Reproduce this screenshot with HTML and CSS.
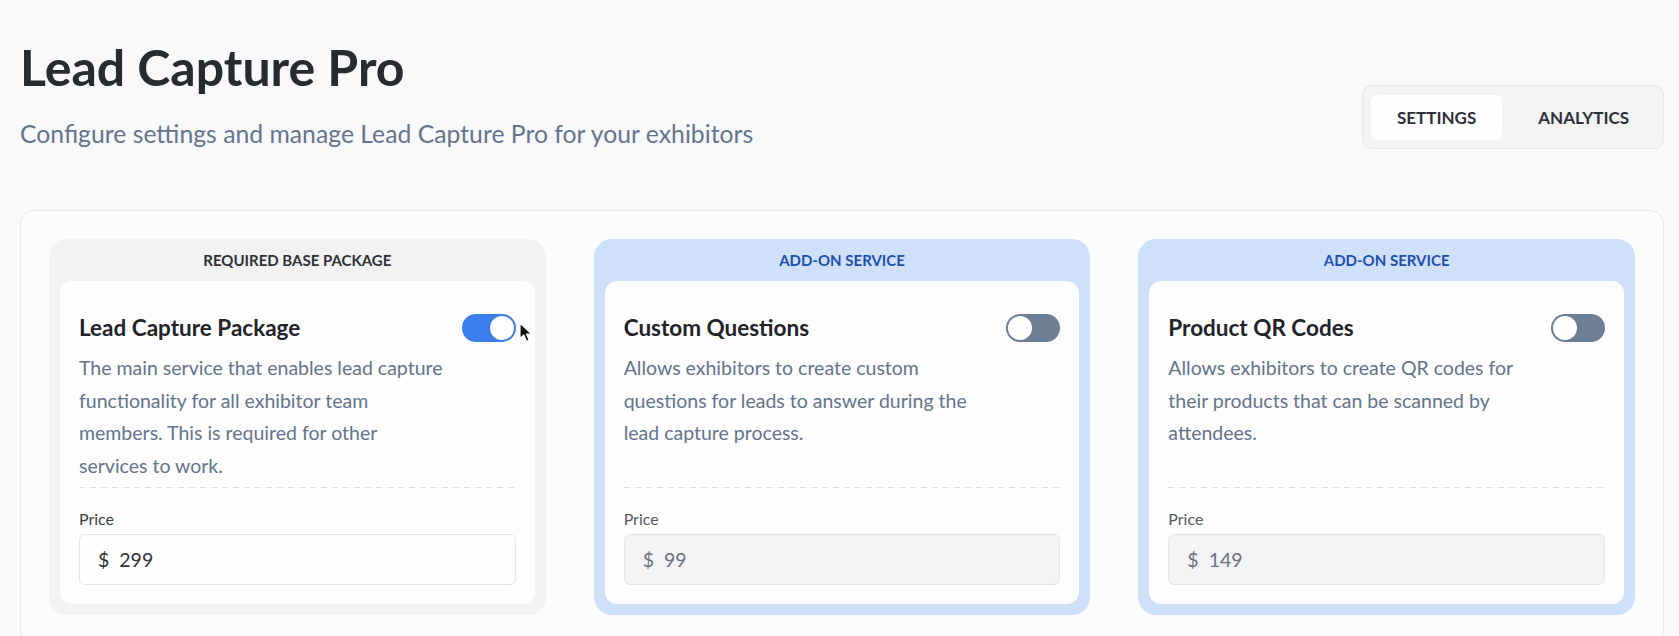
FILE: index.html
```html
<!DOCTYPE html>
<html lang="en">
<head>
<meta charset="utf-8">
<title>Lead Capture Pro</title>
<link rel="stylesheet" href="styles.css">
</head>
<body>
<div class="page">
  <header class="top">
    <div class="intro">
      <h1 class="title">Lead Capture Pro</h1>
      <p class="subtitle">Configure settings and manage Lead Capture Pro for your exhibitors</p>
    </div>
    <nav class="tabs">
      <button class="tab active">SETTINGS</button>
      <button class="tab">ANALYTICS</button>
    </nav>
  </header>

  <section class="panel">
    <div class="grid">
      <article class="pkg base">
        <div class="pkg-label">REQUIRED BASE PACKAGE</div>
        <div class="pkg-body">
          <div class="pkg-top">
            <div class="pkg-text">
              <h2 class="pkg-title">Lead Capture Package</h2>
              <p class="desc">The main service that enables lead capture functionality for all exhibitor team members. This is required for other services to work.</p>
            </div>
            <span class="toggle on"><span class="knob"></span>
              <svg class="cursor" width="14" height="21" viewBox="0 0 14 21"><path d="M1 1 L1 16.5 L4.8 13 L7.6 19.4 L10.2 18.3 L7.5 12 L12.6 12 Z" fill="#111" stroke="#fff" stroke-width="1.2" stroke-linejoin="round"/></svg>
            </span>
          </div>
          <div class="divider"></div>
          <label class="price-label">Price</label>
          <div class="field"><span class="cur">$</span><span>299</span></div>
        </div>
      </article>

      <article class="pkg addon">
        <div class="pkg-label">ADD-ON SERVICE</div>
        <div class="pkg-body">
          <div class="pkg-top">
            <div class="pkg-text">
              <h2 class="pkg-title">Custom Questions</h2>
              <p class="desc">Allows exhibitors to create custom questions for leads to answer during the lead capture process.</p>
            </div>
            <span class="toggle off"><span class="knob"></span></span>
          </div>
          <div class="divider"></div>
          <label class="price-label muted">Price</label>
          <div class="field disabled"><span class="cur">$</span><span>99</span></div>
        </div>
      </article>

      <article class="pkg addon">
        <div class="pkg-label">ADD-ON SERVICE</div>
        <div class="pkg-body">
          <div class="pkg-top">
            <div class="pkg-text">
              <h2 class="pkg-title">Product QR Codes</h2>
              <p class="desc">Allows exhibitors to create QR codes for their products that can be scanned by attendees.</p>
            </div>
            <span class="toggle off"><span class="knob"></span></span>
          </div>
          <div class="divider"></div>
          <label class="price-label muted">Price</label>
          <div class="field disabled"><span class="cur">$</span><span>149</span></div>
        </div>
      </article>
    </div>
  </section>
</div>
</body>
</html>
```

FILE: styles.css
```css
html, body {
  margin: 0;
  padding: 0;
  overflow: hidden;
  background: #f8f9fb;
  font-family: Lato, "Noto Sans", sans-serif;
}

.page {
  padding: 38px 15px 0 20px;
}

.top {
  display: flex;
  justify-content: space-between;
  align-items: flex-end;
}

.title {
  margin: 0;
  font-size: 50px;
  line-height: 58px;
  font-weight: 700;
  color: #272a31;
}

.subtitle {
  margin: 21px 0 0;
  font-size: 24.75px;
  line-height: 33px;
  color: #65748b;
}

.tabs {
  display: flex;
  gap: 10px;
  padding: 9px 8px 8px;
  background: #f3f3f4;
  border: 1px solid #e5e6e8;
  border-radius: 10px;
  margin-bottom: 1px;
}

.tab {
  border: 0;
  background: transparent;
  font-family: Lato, "Noto Sans", sans-serif;
  font-weight: 700;
  font-size: 17px;
  height: 45px;
  padding: 0 26px;
  color: #2d3038;
  border-radius: 6px;
}

.tab.active {
  background: #fefefe;
}

.panel {
  margin-top: 60px;
  background: #fcfcfc;
  border: 1px solid #e6e7ea;
  border-radius: 14px;
  padding: 28px;
}

.grid {
  display: grid;
  grid-template-columns: repeat(3, 1fr);
  gap: 48px;
}

.pkg {
  border-radius: 18px;
  padding: 0 11px 11px;
  display: flex;
  flex-direction: column;
}

.pkg.base { background: #f2f2f3; }
.pkg.addon { background: #cfe1f8; }

.pkg-label {
  text-align: center;
  font-size: 15px;
  font-weight: 700;
  line-height: 20px;
  padding: 11px 0;
  color: #2f3137;
}

.addon .pkg-label { color: #1f4fae; }

.pkg-body {
  flex: 1;
  background: #fdfdfd;
  border-radius: 12px;
  padding: 33px 19px 19px;
  display: flex;
  flex-direction: column;
}

.pkg-top {
  display: flex;
  gap: 12px;
  align-items: flex-start;
  padding-bottom: 5px;
}

.pkg-text { flex: 1; }

.pkg-title {
  margin: 0;
  font-size: 22.5px;
  line-height: 28px;
  font-weight: 700;
  color: #212328;
}

.desc {
  margin: 10px 0 0;
  font-size: 19.5px;
  line-height: 32.5px;
  color: #64748b;
}

.toggle {
  position: relative;
  flex: none;
  width: 54px;
  height: 28px;
  border-radius: 14px;
}

.toggle.on { background: #3b7de9; }
.toggle.off { background: #6e7e95; }

.knob {
  position: absolute;
  top: 2px;
  width: 24px;
  height: 24px;
  border-radius: 50%;
  background: #ffffff;
}

.on .knob { right: 2px; }
.off .knob { left: 2px; }

.cursor {
  position: absolute;
  left: 57px;
  top: 8px;
}

.divider {
  margin-top: auto;
  height: 1px;
  background: repeating-linear-gradient(90deg, #dcdfe3 0 6px, transparent 6px 11px);
}

.price-label {
  display: block;
  margin-top: 19px;
  font-size: 16px;
  line-height: 24px;
  color: #3a3f47;
}

.price-label.muted { color: #555b66; }

.field {
  margin-top: 3px;
  height: 51px;
  box-sizing: border-box;
  border: 1px solid #e3e5e8;
  border-radius: 6px;
  background: #fefefe;
  display: flex;
  align-items: center;
  padding: 0 18px;
  font-size: 19.5px;
  color: #2d3036;
}

.field.disabled {
  background: #f2f3f5;
  color: #6b7280;
}

.cur { margin-right: 10px; }
```
